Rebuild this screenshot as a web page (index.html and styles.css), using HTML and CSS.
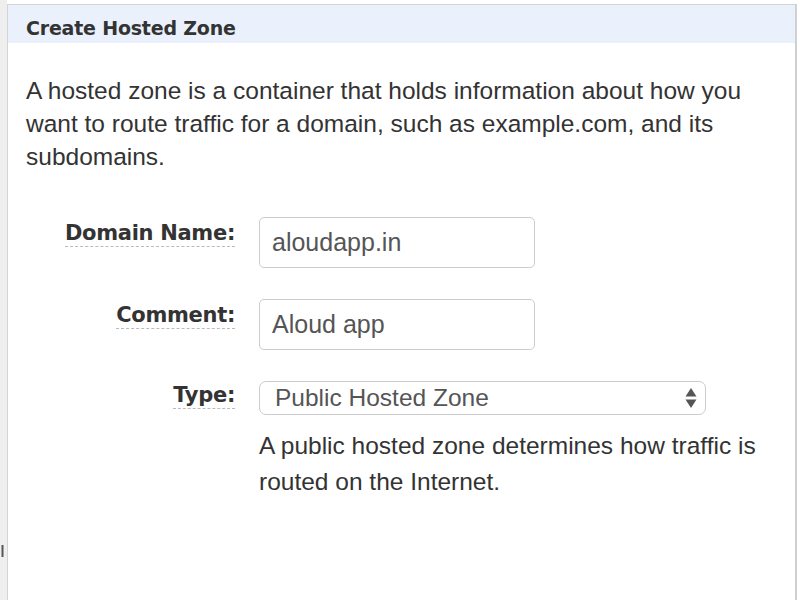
FILE: index.html
```html
<!DOCTYPE html>
<html>
<head>
<meta charset="utf-8">
<link rel="stylesheet" href="styles.css">
</head>
<body>
<div class="page">
  <div class="gutter"><span class="grip"></span></div>
  <div class="panel">
    <div class="panel-head">Create Hosted Zone</div>
    <div class="panel-body">
      <p class="intro">A hosted zone is a container that holds information about how you want to route traffic for a domain, such as example.com, and its subdomains.</p>
      <div class="form">
        <div class="row">
          <div class="label"><span>Domain Name:</span></div>
          <div class="field"><div class="input">aloudapp.in</div></div>
        </div>
        <div class="row">
          <div class="label"><span>Comment:</span></div>
          <div class="field"><div class="input">Aloud app</div></div>
        </div>
        <div class="row row-type">
          <div class="label"><span>Type:</span></div>
          <div class="field">
            <div class="select">
              <span>Public Hosted Zone</span>
              <svg class="arrows" width="12" height="22" viewBox="0 0 12 22"><path d="M6 1 L11.5 9.5 L0.5 9.5 Z" fill="#555"/><path d="M6 21 L11.5 12.5 L0.5 12.5 Z" fill="#555"/></svg>
            </div>
            <p class="help">A public hosted zone determines how traffic is routed on the Internet.</p>
          </div>
        </div>
      </div>
    </div>
  </div>
</div>
</body>
</html>
```
FILE: styles.css
```css
html, body { margin: 0; padding: 0; background: #fff; }
body { width: 800px; height: 600px; overflow: hidden; }
* { box-sizing: border-box; }
.page { display: flex; height: 600px; }
.gutter { width: 7px; background: #efefef; position: relative; flex: none; }
.grip { position: absolute; left: 1px; top: 545px; width: 3px; height: 12px; background: linear-gradient(to right, #ccc, #555, #ccc); }
.panel {
  margin-top: 4px; width: 790px; flex: none;
  border-left: 1px solid #d4d4d4; border-top: 1px solid #d4d4d4; border-right: 2px solid #d0d0d0;
  background: #fff;
}
.panel-head {
  background: #eaf1fd; height: 38px; line-height: 29px; padding: 9px 0 0 18px;
  font-family: "DejaVu Sans", Verdana, sans-serif; font-weight: bold; font-size: 19px; color: #333;
  letter-spacing: -0.2px;
}
.panel-body { padding: 31px 18px 0 18px; font-family: "Liberation Sans", Arial, sans-serif; }
.intro { margin: 0; font-size: 24.5px; line-height: 33px; color: #333; }
.form { margin-top: 44px; }
.row { display: flex; align-items: flex-start; margin-bottom: 31px; }
.label { width: 233px; flex: none; text-align: right; padding-right: 24px; padding-top: 4px; line-height: 24px; }
.label span {
  font-family: "DejaVu Sans", Verdana, sans-serif; font-weight: bold; font-size: 21px; color: #333;
  border-bottom: 1.5px dashed #bbb; padding-bottom: 1px; letter-spacing: -0.3px;
}
.input {
  width: 276px; height: 51px; border: 1px solid #ccc; border-radius: 5px;
  padding-left: 12px; line-height: 49px; font-size: 25px; color: #555;
}
.row-type .label { padding-top: 2px; }
.select {
  width: 447px; height: 34px; border: 1px solid #ccc; border-radius: 7px;
  padding: 0 8px 0 15px; display: flex; align-items: center; justify-content: space-between;
  font-size: 24.5px; color: #555; line-height: 32px;
}
.arrows { display: block; }
.help { margin: 13px 0 0 0; font-size: 24.5px; line-height: 36px; color: #333; width: 530px; }
```
